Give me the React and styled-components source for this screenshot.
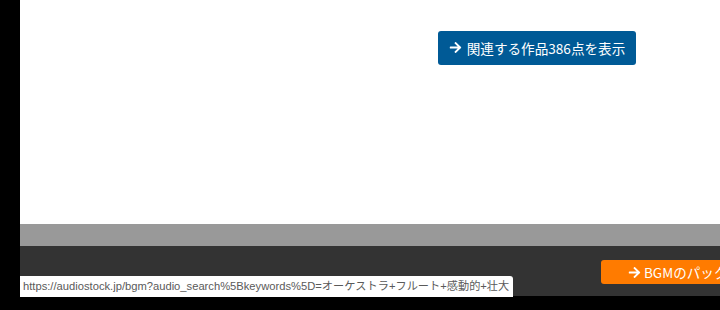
import React from "react";
import styled, { createGlobalStyle } from "styled-components";

const GlobalStyle = createGlobalStyle`
  html, body {
    margin: 0;
    padding: 0;
    background: #000;
    overflow: hidden;
  }
  body {
    font-family: "Noto Sans CJK JP", "Noto Sans", sans-serif;
  }
`;

function ArrowRight({ size = 12 }) {
  return (
    <svg width={size} height={size} viewBox="0 0 448 512" aria-hidden="true">
      <path
        fill="currentColor"
        d="M190.5 66.9l22.2-22.2c9.4-9.4 24.6-9.4 33.9 0L441 239c9.4 9.4 9.4 24.6 0 33.9L246.6 467.3c-9.4 9.4-24.6 9.4-33.9 0l-22.2-22.2c-9.5-9.5-9.3-25 .4-34.3L311.4 296H24c-13.3 0-24-10.7-24-24v-32c0-13.3 10.7-24 24-24h287.4L190.9 101.2c-9.8-9.3-10-24.8-.4-34.3z"
      />
    </svg>
  );
}

export default function App() {
  return (
    <>
      <GlobalStyle />
      <Screen>
        <Page>
          <Content>
            <RelatedButton>
              <ArrowRight size={13} />
              <span>関連する作品386点を表示</span>
            </RelatedButton>
          </Content>
          <Divider />
          <Footer>
            <PackButton>
              <ArrowRight size={13} />
              <span>BGMのパックを見る</span>
            </PackButton>
          </Footer>
        </Page>
        <StatusTip>
          https://audiostock.jp/bgm?audio_search%5Bkeywords%5D=オーケストラ+フルート+感動的+壮大
        </StatusTip>
      </Screen>
    </>
  );
}

const Screen = styled.div`
  position: relative;
  width: 720px;
  height: 310px;
  background: #000;
  padding-left: 20px;
  box-sizing: border-box;
  overflow: hidden;
`;

const Page = styled.div`
  display: flex;
  flex-direction: column;
  width: 700px;
`;

const Content = styled.div`
  height: 224px;
  background: #fff;
  display: flex;
  justify-content: flex-end;
  align-items: flex-start;
  padding: 31px 84px 0 0;
  box-sizing: border-box;
`;

const RelatedButton = styled.button`
  display: flex;
  align-items: center;
  justify-content: center;
  gap: 5px;
  width: 198px;
  height: 34px;
  border: none;
  border-radius: 3px;
  background: #005a96;
  color: #fff;
  font-family: inherit;
  font-size: 13.6px;
  padding: 0 0 1px;
  cursor: pointer;
`;

const Divider = styled.div`
  height: 22px;
  background: #999;
`;

const Footer = styled.div`
  height: 50px;
  background: #333;
  display: flex;
  align-items: flex-start;
  padding: 14px 0 0 581px;
  box-sizing: border-box;
  overflow: hidden;
`;

const PackButton = styled.button`
  display: flex;
  align-items: center;
  gap: 3px;
  flex-shrink: 0;
  width: 200px;
  height: 24px;
  border: none;
  border-radius: 3px;
  background: #ff7b00;
  color: #fff;
  font-family: inherit;
  font-size: 13.5px;
  padding: 0 0 0 27px;
  white-space: nowrap;
  cursor: pointer;
`;

const StatusTip = styled.div`
  position: absolute;
  left: 20px;
  top: 276px;
  height: 21px;
  padding: 0 4px 0 3px;
  background: #fff;
  border-top-right-radius: 3px;
  color: #5a5a5a;
  font-family: "Liberation Sans", "Noto Sans CJK JP", sans-serif;
  font-size: 11.2px;
  line-height: 21px;
  white-space: nowrap;
`;
